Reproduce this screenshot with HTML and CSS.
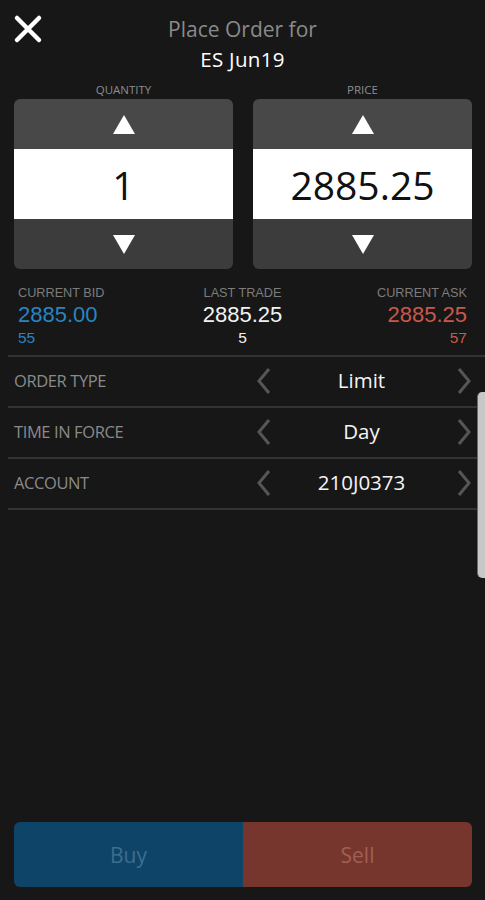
FILE: index.html
```html
<!DOCTYPE html>
<html>
<head>
<meta charset="utf-8">
<link rel="stylesheet" href="styles.css">
</head>
<body>
<div class="screen">
  <header class="header">
    <button class="close" aria-label="Close">
      <svg width="30" height="30" viewBox="0 0 30 30"><path d="M4 4 L26 26 M26 4 L4 26" stroke="#fff" stroke-width="4.5" stroke-linecap="round" fill="none"/></svg>
    </button>
    <div class="title">
      <div class="title-sub">Place Order for</div>
      <div class="title-main">ES Jun19</div>
    </div>
    <div></div>
  </header>

  <section class="spinners">
    <div class="spinner">
      <div class="spin-label">QUANTITY</div>
      <div class="spin-box">
        <div class="spin-up"><svg width="22" height="19" viewBox="0 0 22 19"><path d="M11 0 L22 19 L0 19 Z" fill="#fff"/></svg></div>
        <div class="spin-value">1</div>
        <div class="spin-down"><svg width="22" height="19" viewBox="0 0 22 19"><path d="M0 0 L22 0 L11 19 Z" fill="#fff"/></svg></div>
      </div>
    </div>
    <div class="spinner">
      <div class="spin-label">PRICE</div>
      <div class="spin-box">
        <div class="spin-up"><svg width="22" height="19" viewBox="0 0 22 19"><path d="M11 0 L22 19 L0 19 Z" fill="#fff"/></svg></div>
        <div class="spin-value">2885.25</div>
        <div class="spin-down"><svg width="22" height="19" viewBox="0 0 22 19"><path d="M0 0 L22 0 L11 19 Z" fill="#fff"/></svg></div>
      </div>
    </div>
  </section>

  <section class="stats">
    <div class="stat stat-left">
      <div class="stat-label">CURRENT BID</div>
      <div class="stat-price bid">2885.00</div>
      <div class="stat-size bid">55</div>
    </div>
    <div class="stat stat-center">
      <div class="stat-label">LAST TRADE</div>
      <div class="stat-price last">2885.25</div>
      <div class="stat-size last">5</div>
    </div>
    <div class="stat stat-right">
      <div class="stat-label">CURRENT ASK</div>
      <div class="stat-price ask">2885.25</div>
      <div class="stat-size ask">57</div>
    </div>
  </section>

  <section class="rows">
    <div class="row">
      <div class="row-label">ORDER TYPE</div>
      <div class="row-control">
        <svg class="chev" width="16" height="28" viewBox="0 0 16 28"><path d="M13 2 L3 14 L13 26" stroke="#565656" stroke-width="3" fill="none"/></svg>
        <div class="row-value">Limit</div>
        <svg class="chev" width="16" height="28" viewBox="0 0 16 28"><path d="M3 2 L13 14 L3 26" stroke="#565656" stroke-width="3" fill="none"/></svg>
      </div>
    </div>
    <div class="row">
      <div class="row-label">TIME IN FORCE</div>
      <div class="row-control">
        <svg class="chev" width="16" height="28" viewBox="0 0 16 28"><path d="M13 2 L3 14 L13 26" stroke="#565656" stroke-width="3" fill="none"/></svg>
        <div class="row-value">Day</div>
        <svg class="chev" width="16" height="28" viewBox="0 0 16 28"><path d="M3 2 L13 14 L3 26" stroke="#565656" stroke-width="3" fill="none"/></svg>
      </div>
    </div>
    <div class="row">
      <div class="row-label">ACCOUNT</div>
      <div class="row-control">
        <svg class="chev" width="16" height="28" viewBox="0 0 16 28"><path d="M13 2 L3 14 L13 26" stroke="#565656" stroke-width="3" fill="none"/></svg>
        <div class="row-value">210J0373</div>
        <svg class="chev" width="16" height="28" viewBox="0 0 16 28"><path d="M3 2 L13 14 L3 26" stroke="#565656" stroke-width="3" fill="none"/></svg>
      </div>
    </div>
  </section>

  <div class="actions">
    <button class="btn buy">Buy</button>
    <button class="btn sell">Sell</button>
  </div>

  <div class="scroll-thumb"></div>
</div>
</body>
</html>
```

FILE: styles.css
```css
* { box-sizing: border-box; }
html, body { margin: 0; padding: 0; }
body {
  background: #171717;
  font-family: "Open Sans", "Noto Sans", "Liberation Sans", sans-serif;
  color: #fff;
}
.screen {
  position: relative;
  width: 485px;
  height: 900px;
  display: flex;
  flex-direction: column;
  overflow: hidden;
}

.header {
  display: grid;
  grid-template-columns: 1fr auto 1fr;
  height: 75px;
}
.close {
  align-self: start;
  justify-self: start;
  margin: 14px 0 0 13px;
  padding: 0;
  border: 0;
  background: none;
  width: 30px;
  height: 30px;
  display: flex;
}
.title { text-align: center; }
.title-sub {
  margin-top: 15px;
  font-size: 21px;
  line-height: 28px;
  color: #8a8a8a;
}
.title-main {
  margin-top: 2px;
  font-size: 20.5px;
  line-height: 28px;
  font-weight: 500;
  color: #fff;
  letter-spacing: 0.3px;
}

.spinners {
  display: grid;
  grid-template-columns: 219px 219px;
  column-gap: 20px;
  padding-left: 14px;
}
.spin-label {
  text-align: center;
  font-size: 11.5px;
  line-height: 14px;
  color: #8c8c8c;
  margin-top: 8px;
  margin-bottom: 2px;
}
.spin-box {
  height: 170px;
  border-radius: 6px;
  overflow: hidden;
  display: flex;
  flex-direction: column;
}
.spin-up, .spin-down {
  height: 50px;
  display: flex;
  align-items: center;
  justify-content: center;
}
.spin-up { background: #484848; }
.spin-down { background: #3c3c3c; }
.spin-value {
  height: 70px;
  background: #fff;
  color: #111;
  font-size: 39px;
  display: flex;
  align-items: center;
  justify-content: center;
}

.stats {
  display: grid;
  grid-template-columns: 1fr auto 1fr;
  padding: 16px 18px 8px 18px;
  margin-left: 8px;
  border-bottom: 2px solid #333;
  font-family: "Liberation Sans", Arial, sans-serif;
}
.stat-left { margin-left: -8px; }
.stat-center { text-align: center; margin-left: -8px; }
.stat-right { text-align: right; }
.stat-label {
  font-size: 12.7px;
  line-height: 16px;
  color: #7c7c7c;
}
.stat-price {
  margin-top: 2px;
  font-size: 22px;
  line-height: 24px;
}
.stat-size {
  margin-top: 2px;
  font-size: 15.5px;
  line-height: 18px;
}
.bid { color: #2b84c2; }
.ask { color: #c9584c; }
.last { color: #f2f2f2; }

.rows { margin-left: 8px; }
.row {
  display: grid;
  grid-template-columns: 1fr 224px;
  align-items: center;
  height: 51px;
  border-bottom: 2px solid #333;
  padding-left: 6px;
  padding-bottom: 3px;
}
.row-label {
  font-size: 16.5px;
  color: #8a8a8a;
  letter-spacing: -0.4px;
}
.row-control {
  display: grid;
  grid-template-columns: 22px 1fr 22px;
  align-items: center;
  padding-right: 10px;
  margin-left: -8px;
}
.chev { display: block; justify-self: center; margin-top: 2px; }
.row-value {
  text-align: center;
  font-size: 20.5px;
  font-weight: 500;
  color: #f4f4f4;
  padding-right: 5px;
}

.actions {
  margin: auto 13px 13px 14px;
  height: 65px;
  display: grid;
  grid-template-columns: 1fr 1fr;
  border-radius: 6px;
  overflow: hidden;
}
.btn {
  border: 0;
  font-family: inherit;
  font-size: 21px;
  padding: 0;
}
.buy { background: #0d4468; color: #3e6e8e; }
.sell { background: #76362d; color: #a05f55; }

.scroll-thumb {
  position: absolute;
  right: 0;
  top: 392px;
  width: 8px;
  height: 186px;
  background: #c8c8c8;
  border-left: 1px solid #6a6a6a;
  border-radius: 5px 0 0 5px;
}
```
